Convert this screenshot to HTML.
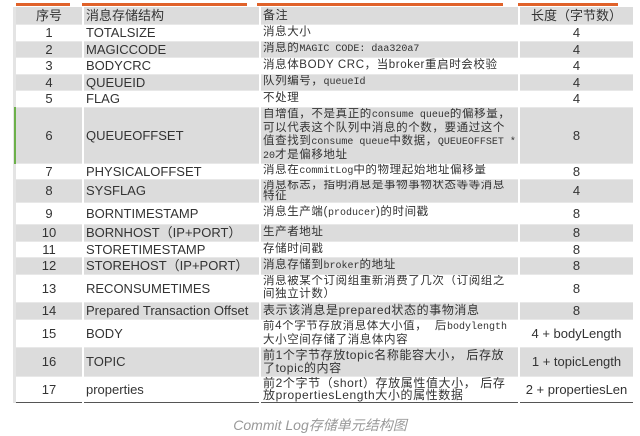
<!DOCTYPE html>
<html><head><meta charset="utf-8"><style>
body{margin:0;width:640px;height:436px;background:#fff;position:relative;overflow:hidden;font-family:"Liberation Sans","Noto Sans CJK SC",sans-serif;}
.bar{position:absolute;top:3px;height:3px;background:#e0622a;}
table{position:absolute;left:16px;top:7px;border-collapse:collapse;table-layout:fixed;width:617px;}
td{padding:0 2px;border-right:2px solid #fff;color:#333;overflow:hidden;white-space:nowrap;line-height:13px;}
td:nth-child(1){width:62px;text-align:center;font-size:13px;}
td:nth-child(2){width:171px;font-size:13px;}
td:nth-child(3){width:253px;font-size:11.5px;letter-spacing:0.6px;line-height:13px;}
td:nth-child(4){text-align:center;font-size:13px;border-right:none;}
tr{background:#fff;}
tr.g{background:#dcdcdc;}
tr{border-bottom:1px solid #e8e8e8}
.m{font-family:"Liberation Mono",monospace;font-size:10px;letter-spacing:0;}
.cap{position:absolute;top:415px;left:0;width:640px;text-align:center;font-size:14px;font-style:italic;color:#999;}
</style></head><body>
<div class="bar" style="left:16px;width:54px"></div>
<div class="bar" style="left:82px;width:165px"></div>
<div class="bar" style="left:257px;width:246px"></div>
<div class="bar" style="left:518px;width:100px"></div>
<div style="position:absolute;left:13px;top:7px;width:3px;height:396px;background:#e4e4e4"></div>
<div style="position:absolute;left:14px;top:107px;width:2px;height:57px;background:#6cb04a"></div>
<table>
<tr class="g" style="height:17px"><td>序号</td><td>消息存储结构</td><td style="font-size:12px">备注</td><td>长度（字节数）</td></tr>
<tr style="height:17px"><td>1</td><td>TOTALSIZE</td><td>消息大小</td><td>4</td></tr>
<tr class="g" style="height:16px"><td>2</td><td>MAGICCODE</td><td>消息的<span class="m">MAGIC CODE: daa320a7</span></td><td>4</td></tr>
<tr style="height:17px"><td>3</td><td>BODYCRC</td><td>消息体BODY CRC，当broker重启时会校验</td><td>4</td></tr>
<tr class="g" style="height:16px"><td>4</td><td>QUEUEID</td><td>队列编号，<span class="m">queueId</span></td><td>4</td></tr>
<tr style="height:17px"><td>5</td><td>FLAG</td><td>不处理</td><td>4</td></tr>
<tr class="g" style="height:56px"><td>6</td><td>QUEUEOFFSET</td><td style="line-height:13px">自增值，不是真正的<span class="m">consume queue</span>的偏移量，<br>可以代表这个队列中消息的个数，要通过这个<br>值查找到<span class="m">consume queue</span>中数据，<span class="m">QUEUEOFFSET *</span><br><span class="m">20</span>才是偏移地址</td><td>8</td></tr>
<tr style="height:16px"><td>7</td><td>PHYSICALOFFSET</td><td>消息在<span class="m">commitLog</span>中的物理起始地址偏移量</td><td>8</td></tr>
<tr class="g" style="height:23px"><td>8</td><td>SYSFLAG</td><td style="line-height:11px">消息标志，指明消息是事物事物状态等等消息<br>特征</td><td>4</td></tr>
<tr style="height:22px"><td>9</td><td>BORNTIMESTAMP</td><td>消息生产端(<span class="m">producer</span>)的时间戳</td><td>8</td></tr>
<tr class="g" style="height:17px"><td>10</td><td>BORNHOST（IP+PORT）</td><td>生产者地址</td><td>8</td></tr>
<tr style="height:16px"><td>11</td><td>STORETIMESTAMP</td><td>存储时间戳</td><td>8</td></tr>
<tr class="g" style="height:17px"><td>12</td><td>STOREHOST（IP+PORT）</td><td>消息存储到<span class="m">broker</span>的地址</td><td>8</td></tr>
<tr style="height:28px"><td>13</td><td>RECONSUMETIMES</td><td>消息被某个订阅组重新消费了几次（订阅组之<br>间独立计数）</td><td>8</td></tr>
<tr class="g" style="height:17px"><td>14</td><td>Prepared Transaction Offset</td><td style="font-size:12px">表示该消息是prepared状态的事物消息</td><td>8</td></tr>
<tr style="height:28px"><td>15</td><td>BODY</td><td>前4个字节存放消息体大小值，&nbsp;&nbsp;后<span class="m">bodylength</span><br>大小空间存储了消息体内容</td><td>4 + bodyLength</td></tr>
<tr class="g" style="height:29px"><td>16</td><td>TOPIC</td><td style="font-size:12px">前1个字节存放topic名称能容大小，&nbsp;后存放<br>了topic的内容</td><td>1 + topicLength</td></tr>
<tr style="height:26px;border-bottom:1px solid #555"><td>17</td><td>properties</td><td style="font-size:12px;line-height:12px">前2个字节（short）存放属性值大小，&nbsp;后存<br>放propertiesLength大小的属性数据</td><td>2 + propertiesLen</td></tr>
</table>
<div class="cap">Commit Log存储单元结构图</div>
</body></html>
